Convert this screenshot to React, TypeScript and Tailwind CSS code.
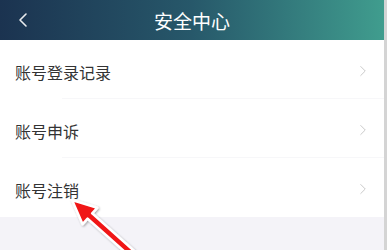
import { ChevronLeft, ChevronRight } from 'lucide-react';

const items = ['账号登录记录', '账号申诉', '账号注销'];

export default function App() {
  return (
    <div
      className="relative w-[387px] h-[250px] overflow-hidden bg-[#d4d4d4]"
      style={{ fontFamily: '"Noto Sans CJK SC", "Noto Sans", sans-serif' }}
    >
      <div className="w-[384px] h-full flex flex-col bg-[#f4f3f8]">
        <header className="relative h-[40px] flex items-center justify-center bg-gradient-to-r from-[#1b3350] via-[#27586a] to-[#409d8e]">
          <ChevronLeft size={24} strokeWidth={1.6} className="absolute left-[11px] top-[8px] text-white/90" />
          <h1 className="text-[19px] text-white leading-none">安全中心</h1>
        </header>
        <ul className="bg-white">
          {items.map((label, i) => (
            <li key={label} className="relative h-[59px] flex items-center justify-between pl-[15px] pr-[12px]">
              <span className="text-[16px] text-[#333] leading-none mt-[4px]">{label}</span>
              <ChevronRight size={18} strokeWidth={1.3} className="text-[#c8c8c8] mt-[2px]" />
              {i < items.length - 1 && (
                <div className="absolute left-[62px] right-0 bottom-0 h-px bg-[#f7f7f9]" />
              )}
            </li>
          ))}
        </ul>
      </div>
      {/* annotation arrow pointing at the last row */}
      <svg className="absolute left-0 top-0" width="387" height="250" viewBox="0 0 387 250">
        <defs>
          <filter id="sh" x="-20%" y="-20%" width="140%" height="140%">
            <feDropShadow dx="1" dy="1" stdDeviation="1.2" floodColor="#000" floodOpacity="0.35" />
          </filter>
        </defs>
        <g filter="url(#sh)">
          <polygon
            points="72,200 97.2,207.8 92.2,213.4 134,250.7 129.4,255.9 87.6,218.6 82.6,224.2"
            fill="#f01414"
            stroke="#fff"
            strokeWidth="2.5"
            strokeLinejoin="round"
          />
        </g>
      </svg>
    </div>
  );
}
